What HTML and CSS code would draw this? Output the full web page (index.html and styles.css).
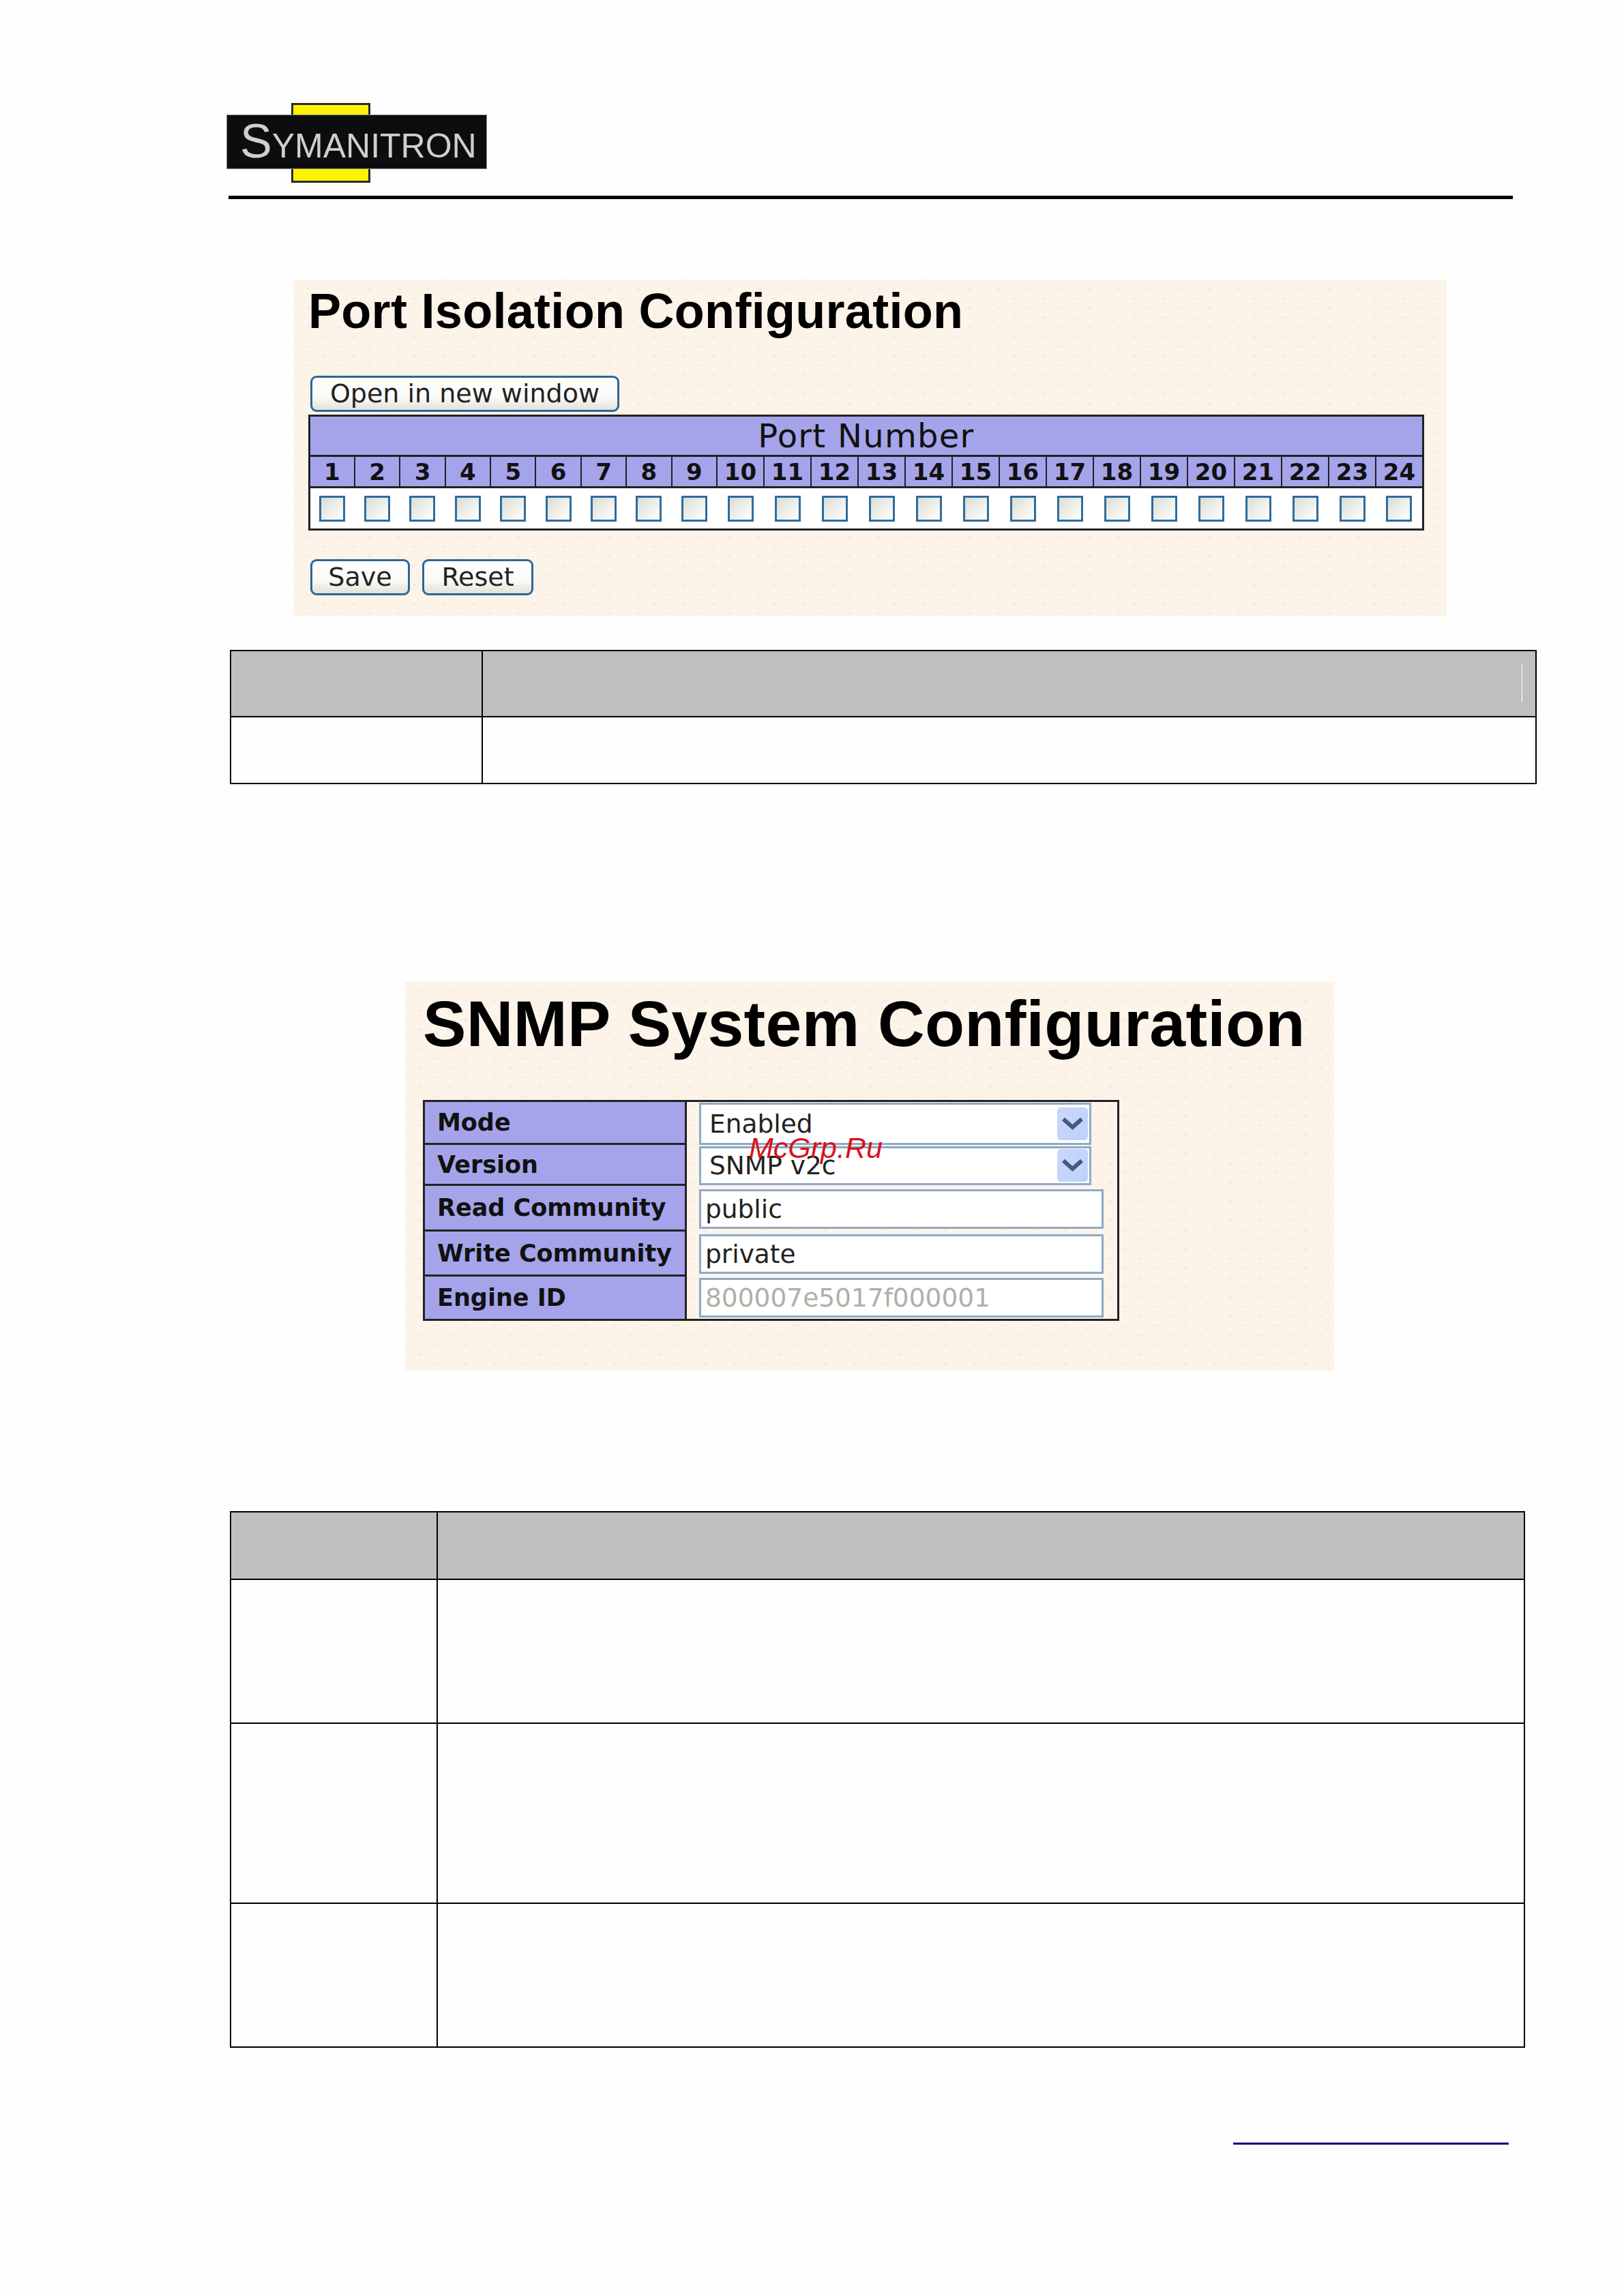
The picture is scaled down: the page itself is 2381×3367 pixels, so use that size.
FILE: index.html
```html
<!DOCTYPE html>
<html lang="en">
<head>
<meta charset="utf-8">
<title>Port Isolation and SNMP System Configuration</title>
<link rel="stylesheet" href="styles.css">
</head>
<body>
<header class="brand">
  <div class="logo">
    <span class="logo-tab"></span>
    <span class="logo-bar"><span class="logo-s">S</span><span>YMANITRON</span></span>
  </div>
  <div class="rule"></div>
</header>

<section class="panel panel-port">
  <h1 class="title-port">Port Isolation Configuration</h1>
  <div class="btn-row btn-row-top"><div class="btn btn-open">Open in new window</div></div>
  <table class="ports">
    <colgroup>
      <col class="c9"><col class="c9"><col class="c9"><col class="c9"><col class="c9"><col class="c9"><col class="c9"><col class="c9"><col class="c9">
      <col class="c15"><col class="c15"><col class="c15"><col class="c15"><col class="c15"><col class="c15"><col class="c15"><col class="c15"><col class="c15"><col class="c15"><col class="c15"><col class="c15"><col class="c15"><col class="c15"><col class="c15">
    </colgroup>
    <tr><th class="ports-title" colspan="24">Port Number</th></tr>
    <tr class="ports-nums">
      <th>1</th><th>2</th><th>3</th><th>4</th><th>5</th><th>6</th><th>7</th><th>8</th><th>9</th><th>10</th><th>11</th><th>12</th><th>13</th><th>14</th><th>15</th><th>16</th><th>17</th><th>18</th><th>19</th><th>20</th><th>21</th><th>22</th><th>23</th><th>24</th>
    </tr>
    <tr class="ports-checks">
      <td><span class="check"></span></td><td><span class="check"></span></td><td><span class="check"></span></td><td><span class="check"></span></td><td><span class="check"></span></td><td><span class="check"></span></td><td><span class="check"></span></td><td><span class="check"></span></td><td><span class="check"></span></td><td><span class="check"></span></td><td><span class="check"></span></td><td><span class="check"></span></td><td><span class="check"></span></td><td><span class="check"></span></td><td><span class="check"></span></td><td><span class="check"></span></td><td><span class="check"></span></td><td><span class="check"></span></td><td><span class="check"></span></td><td><span class="check"></span></td><td><span class="check"></span></td><td><span class="check"></span></td><td><span class="check"></span></td><td><span class="check"></span></td>
    </tr>
  </table>
  <div class="btn-row btn-row-bottom">
    <div class="btn btn-save">Save</div>
    <div class="btn btn-reset">Reset</div>
  </div>
</section>

<table class="doc doc-one">
  <tr class="doc-head"><td class="d1"></td><td class="d2"><div class="caret-wrap"><span class="caret"></span></div></td></tr>
  <tr class="doc-body"><td></td><td></td></tr>
</table>

<section class="panel panel-snmp">
  <h1 class="title-snmp">SNMP System Configuration</h1>
  <div class="cfg">
    <div class="lab">Mode</div>
    <div class="fld"><div class="sel sel-a"><span>Enabled</span><span class="drop"><svg viewBox="0 0 45 48" width="45" height="48"><path d="M9 17 L22.500 29 L36 17" class="chev"/></svg></span></div></div>
    <div class="lab">Version</div>
    <div class="fld"><div class="sel sel-b"><span>SNMP v2c</span><span class="drop"><svg viewBox="0 0 45 48" width="45" height="48"><path d="M9 17 L22.500 29 L36 17" class="chev"/></svg></span></div></div>
    <div class="lab">Read Community</div>
    <div class="fld"><div class="inp">public</div></div>
    <div class="lab">Write Community</div>
    <div class="fld"><div class="inp">private</div></div>
    <div class="lab lab-last">Engine ID</div>
    <div class="fld"><div class="inp inp-off">800007e5017f000001</div></div>
  </div>
  <div class="stamp">McGrp.Ru</div>
</section>

<table class="doc doc-two">
  <tr class="r-head"><td class="d1"></td><td class="d2"></td></tr>
  <tr class="r-a"><td></td><td></td></tr>
  <tr class="r-b"><td></td><td></td></tr>
  <tr class="r-c"><td></td><td></td></tr>
</table>

<div class="footlink"></div>
</body>
</html>
```
FILE: styles.css
```css
html, body { margin: 0; padding: 0; background: #fefefe; }
body { width: 2381px; height: 3367px; overflow: hidden; font-family: "DejaVu Sans", sans-serif; color: #111; }

.brand { padding-top: 168px; }
.logo { position: relative; margin-left: 332px; width: 382px; height: 80px; }
.logo-tab { position: absolute; left: 95px; top: -17px; width: 116px; height: 117px; box-sizing: border-box; background: #fff200; border: 3px solid #2a2a24; }
.logo-bar { position: relative; display: flex; align-items: baseline; box-sizing: border-box; width: 382px; height: 80px; padding: 0 0 0 19px; background: #0c0d0f; border: 1px solid #8a8a8a; color: #cfcfcf; font-family: "Liberation Sans", sans-serif; font-size: 50px; line-height: 76px; }
.logo-s { font-size: 70px; line-height: 76px; }
.rule { height: 5px; width: 1883px; margin: 39px 0 0 335px; background: #000; }

.panel { background-color: #fcf3e9; background-image: radial-gradient(ellipse 5px 2px at center, rgba(222, 200, 172, .3), rgba(222, 200, 172, 0)), radial-gradient(ellipse 5px 2px at center, rgba(222, 200, 172, .3), rgba(222, 200, 172, 0)); background-size: 44px 28px; background-position: 0 0, 22px 14px; box-sizing: border-box; }
.panel-port { margin: 118px 0 0 431px; width: 1690px; height: 493px; padding: 10px 0 0 21px; }
.title-port { margin: 0; font: bold 72px/72px "Liberation Sans", sans-serif; letter-spacing: .3px; color: #000; }

.btn-row { display: flex; gap: 18px; margin-left: 3px; }
.btn-row-top { margin-top: 59px; }
.btn-row-bottom { margin-top: 42px; }
.btn { box-sizing: border-box; height: 53px; border: 3px solid #2d6897; border-radius: 9px; background: linear-gradient(#fff 0%, #fafaf7 60%, #e2e2da 100%); font: 38px/45px "DejaVu Sans", sans-serif; color: #222; display: flex; align-items: center; justify-content: center; }
.btn-open { width: 453px; }
.btn-save { width: 146px; }
.btn-reset { width: 163px; }

.ports { table-layout: fixed; width: 1634px; margin-top: 4px; border-collapse: collapse; border: 3px solid #222; }
.c9 { width: 66.4px; }
.c15 { width: 69px; }
.ports th, .ports td { padding: 0; text-align: center; }
.ports-title { height: 56px; background: #a5a4ea; border-bottom: 3px solid #222; font: normal 48px/50px "DejaVu Sans", sans-serif; letter-spacing: 1.3px; color: #111; }
.ports-nums th { height: 43px; background: #a5a4ea; border-left: 2px solid #222; border-bottom: 3px solid #222; font: bold 34px/40px "DejaVu Sans", sans-serif; color: #111; overflow: hidden; }
.ports-nums th:first-child { border-left: 0; }
.ports-checks td { height: 59px; background: #fff; }
.check { display: block; box-sizing: border-box; width: 38px; height: 38px; margin: 0 auto; border: 3px solid #2f6c9c; background: linear-gradient(135deg, #dcdcd6, #fff); }

.doc { border-collapse: collapse; table-layout: fixed; }
.doc td { border: 2px solid #000; padding: 0; }
.doc-one { margin: 50px 0 0 337px; width: 1916px; }
.doc-two { margin: 206px 0 0 337px; width: 1899px; }
.doc-one .d1 { width: 367px; }
.doc-two .d1 { width: 301px; }
.doc-head td, .r-head td { background: #bfbfbf; }
.doc-head td { height: 95px; }
.doc-body td { height: 96px; }
.caret-wrap { display: flex; justify-content: flex-end; align-items: center; height: 95px; padding-right: 19px; }
.caret { display: block; width: 1px; height: 55px; background: #fff; }

.r-head td { height: 97px; }
.r-a td { height: 209px; }
.r-b td { height: 262px; }
.r-c td { height: 209px; }

.panel-snmp { position: relative; margin: 290px 0 0 594px; width: 1362px; height: 570px; padding: 14px 0 0 26px; }
.title-snmp { margin: 0; font: bold 95px/95px "Liberation Sans", sans-serif; letter-spacing: .3px; color: #000; }
.cfg { display: grid; grid-template-columns: 384px 1fr; grid-template-rows: 63px 60px 67px 66px 62px; box-sizing: border-box; width: 1021px; height: 324px; margin-top: 64px; border: 3px solid #222; }
.lab { display: flex; align-items: center; padding-left: 18px; background: #a5a4ea; border-right: 3px solid #222; border-bottom: 3px solid #222; font: bold 35px/40px "DejaVu Sans", sans-serif; color: #111; }
.lab-last { border-bottom: 0; }
.fld { display: flex; align-items: center; padding-left: 18px; }
.sel, .inp { display: flex; align-items: center; justify-content: space-between; box-sizing: border-box; background: #fff; border: 3px solid #8daac8; font: 37.500px/44px "DejaVu Sans", sans-serif; color: #222; }
.sel { width: 575px; padding: 0 2px 0 12px; }
.sel-a { height: 62px; }
.sel-b { height: 57px; }
.inp { width: 593px; height: 58px; padding-left: 6px; }
.inp-off { color: #b3aea6; }
.drop { display: block; width: 45px; height: 48px; border-radius: 5px; background: linear-gradient(135deg, #ccd6f8, #bcd2fb); }
.drop svg { display: block; }
.chev { fill: none; stroke: #44597c; stroke-width: 6; }
.stamp { position: absolute; left: 504px; top: 222px; font: italic 43px/43px "Liberation Sans", sans-serif; color: #d8131b; }

.footlink { width: 404px; height: 3px; margin: 139px 0 0 1808px; background: #00007f; }
```
